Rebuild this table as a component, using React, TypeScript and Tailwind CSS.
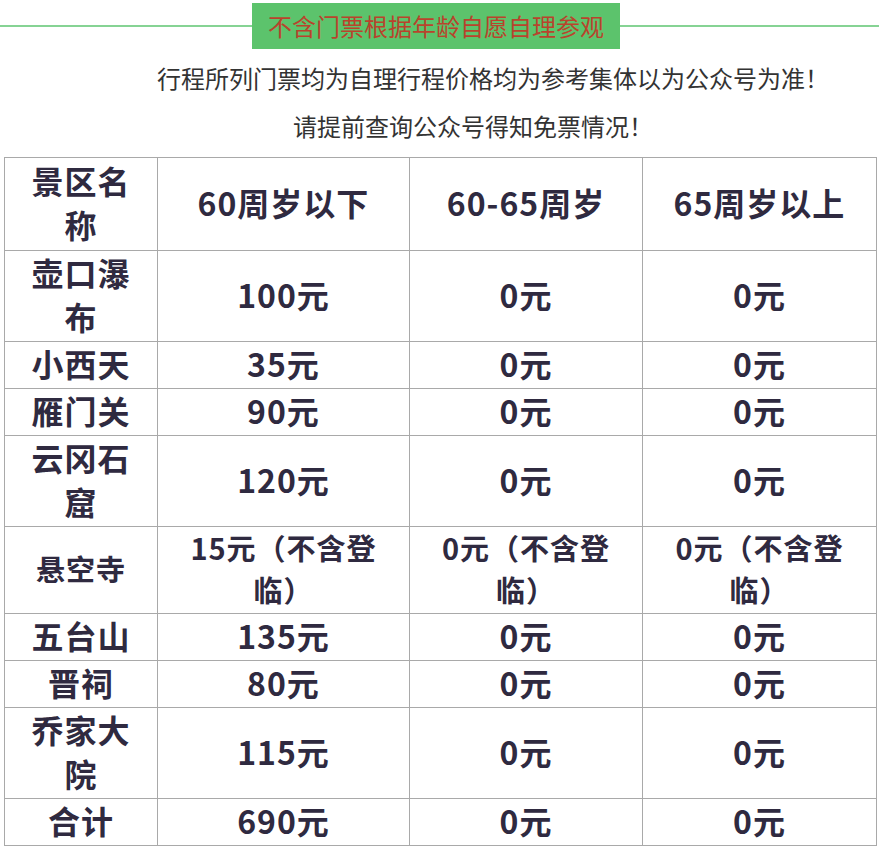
import React from 'react';

type Row = { name: string; cells: string[]; small?: boolean };

const rows: Row[] = [
  { name: '壶口瀑布', cells: ['100元', '0元', '0元'] },
  { name: '小西天', cells: ['35元', '0元', '0元'] },
  { name: '雁门关', cells: ['90元', '0元', '0元'] },
  { name: '云冈石窟', cells: ['120元', '0元', '0元'] },
  { name: '悬空寺', cells: ['15元（不含登临）', '0元（不含登临）', '0元（不含登临）'], small: true },
  { name: '五台山', cells: ['135元', '0元', '0元'] },
  { name: '晋祠', cells: ['80元', '0元', '0元'] },
  { name: '乔家大院', cells: ['115元', '0元', '0元'] },
  { name: '合计', cells: ['690元', '0元', '0元'] },
];

const font = { fontFamily: '"Noto Sans CJK SC", "Noto Sans", sans-serif' };

const Cell = ({ children, head }: { children: React.ReactNode; head?: boolean }) => (
  <td className={`border border-[#a9a9a9] px-[20px] ${head ? 'py-[2px]' : 'py-[1px]'}`}>
    <span className="relative -top-[2px]">{children}</span>
  </td>
);

export default function App() {
  return (
    <div className="w-[879px] min-h-[850px] bg-white pb-[4px]" style={font}>
      {/* title bar */}
      <div className="flex items-center pt-[3px]">
        <div className="w-[252px] h-[2px] bg-[#86d394]" />
        <div className="bg-[#5cc36c] px-[16px] h-[46px] flex items-center text-[24px] leading-none text-[#b9432c]">
          不含门票根据年龄自愿自理参观
        </div>
        <div className="flex-1 h-[2px] bg-[#86d394]" />
      </div>

      <p className="mt-[13px] pl-[107px] text-center text-[24px] leading-[32px] text-[#333]">
        行程所列门票均为自理行程价格均为参考集体以为公众号为准！
      </p>
      <p className="mt-[16px] pl-[67px] text-center text-[24px] leading-[32px] text-[#333]">
        请提前查询公众号得知免票情况！
      </p>

      <table className="mt-[15px] ml-[4px] w-[872px] table-fixed border-collapse text-center font-bold text-[#2f2a40] tracking-[1px]">
        <colgroup>
          <col className="w-[153px]" />
          <col className="w-[252px]" />
          <col className="w-[233px]" />
          <col className="w-[234px]" />
        </colgroup>
        <tbody>
          <tr className="text-[32px] leading-[44px]">
            <Cell head>景区名称</Cell>
            <Cell head>60周岁以下</Cell>
            <Cell head>60-65周岁</Cell>
            <Cell head>65周岁以上</Cell>
          </tr>
          {rows.map((r) => (
            <tr
              key={r.name}
              className={r.small ? 'text-[29px] leading-[42px]' : 'text-[32px] leading-[44px]'}
            >
              <Cell>{r.name}</Cell>
              {r.cells.map((c, i) => (
                <Cell key={i}>{c}</Cell>
              ))}
            </tr>
          ))}
        </tbody>
      </table>
    </div>
  );
}
